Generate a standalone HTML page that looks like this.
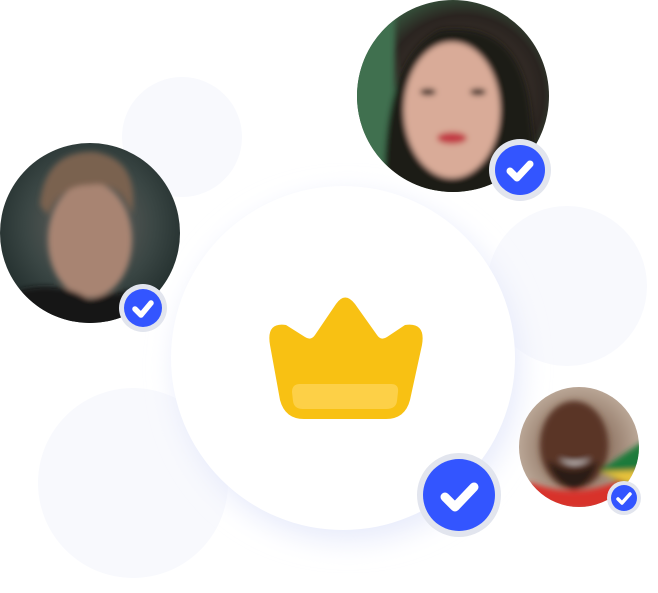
<!DOCTYPE html>
<html><head><meta charset="utf-8"><style>
html,body{margin:0;padding:0;background:#fff;width:658px;height:593px;overflow:hidden}
</style></head><body>
<svg width="658" height="593" viewBox="0 0 658 593" xmlns="http://www.w3.org/2000/svg">
<defs>
<filter id="sh" x="-30%" y="-30%" width="160%" height="160%"><feGaussianBlur stdDeviation="14"/></filter>
<filter id="soft"><feGaussianBlur stdDeviation="3"/></filter>
<radialGradient id="man" cx="0.5" cy="0.45" r="0.6"><stop offset="0" stop-color="#6a6460"/><stop offset="0.6" stop-color="#3a4644"/><stop offset="1" stop-color="#1e2a29"/></radialGradient>
<radialGradient id="wom" cx="0.55" cy="0.5" r="0.6"><stop offset="0" stop-color="#5a4a40"/><stop offset="0.7" stop-color="#2a2420"/><stop offset="1" stop-color="#3c6a4a"/></radialGradient>
<radialGradient id="guy" cx="0.5" cy="0.5" r="0.6"><stop offset="0" stop-color="#6a4a38"/><stop offset="1" stop-color="#c9b8a8"/></radialGradient>
<clipPath id="c1"><circle cx="90" cy="233" r="90"/></clipPath>
<clipPath id="c2"><circle cx="453" cy="96" r="96"/></clipPath>
<clipPath id="c3"><circle cx="579" cy="447" r="60"/></clipPath>
</defs>
<circle cx="182" cy="137" r="60" fill="#f8f9fd"/>
<circle cx="567" cy="286" r="80" fill="#f8f9fd"/>
<circle cx="133" cy="483" r="95" fill="#f8f9fd"/>
<circle cx="348" cy="368" r="172" fill="#e6eafb" filter="url(#sh)"/>
<circle cx="343" cy="358" r="172" fill="#fff"/>
<!-- man -->
<g clip-path="url(#c1)">
<rect x="0" y="143" width="180" height="180" fill="url(#man)"/>
<g filter="url(#soft)">
<ellipse cx="90" cy="240" rx="42" ry="58" fill="#a88472"/>
<path d="M40 205 Q45 150 95 152 Q140 160 132 215 Q120 180 90 185 Q60 185 48 215 Z" fill="#7a6250"/>
<path d="M0 330 L20 290 Q60 280 90 300 Q130 285 170 295 L180 330 Z" fill="#181818"/>
</g>
</g>
<!-- woman -->
<g clip-path="url(#c2)">
<rect x="357" y="0" width="192" height="192" fill="url(#wom)"/>
<g filter="url(#soft)">
<rect x="350" y="0" width="45" height="192" fill="#3f7050"/>
<path d="M385 200 Q380 60 440 30 Q520 20 530 110 L540 200 Z" fill="#1e1a18"/>
<ellipse cx="452" cy="110" rx="48" ry="68" fill="#d9ab98"/>
<ellipse cx="452" cy="138" rx="15" ry="6" fill="#c23a45"/>
<ellipse cx="428" cy="92" rx="8" ry="3.5" fill="#3a2a22"/>
<ellipse cx="478" cy="92" rx="8" ry="3.5" fill="#3a2a22"/>
</g>
</g>
<!-- small guy -->
<g clip-path="url(#c3)">
<rect x="519" y="387" width="120" height="120" fill="url(#guy)"/>
<g filter="url(#soft)">
<path d="M600 470 L645 440 L645 500 Z" fill="#1e7a3a"/>
<path d="M600 472 L645 470 L645 490 Z" fill="#e8c23a"/>
<ellipse cx="574" cy="445" rx="34" ry="44" fill="#5a3626"/>
<path d="M548 460 Q574 480 598 460 Q594 482 574 490 Q552 482 548 460Z" fill="#2a1a14"/>
<path d="M558 458 Q574 470 592 458 Q574 466 558 458Z" fill="#fff"/>
<path d="M515 510 L530 482 Q574 500 620 480 L645 510 Z" fill="#d8302a"/>
</g>
</g>
<!-- crown -->
<path d="M270 345 Q266 322 286 325 L305 337 Q311 341 315 335 L336 304 Q345 291 355 304 L377 335 Q381 341 387 337 L405 325 Q426 322 422 345 L410 400 Q405 419 386 419 L304 419 Q285 419 280 400 Z" fill="#f8c113"/>
<path d="M292 392 Q292 384 300 384 L391 384 Q399 384 398 392 L397 401 Q396 409 386 409 L303 409 Q294 409 293 401 Z" fill="#fdd047"/>
<!-- badges -->
<g>
<circle cx="520" cy="170" r="31" fill="#e2e5ee"/><circle cx="520" cy="170" r="25" fill="#3355ff"/>
<path d="M510 171 L517 178 L530 164" stroke="#fff" stroke-width="7" fill="none" stroke-linecap="round" stroke-linejoin="round"/>
<circle cx="143" cy="308" r="24" fill="#e2e5ee"/><circle cx="143" cy="308" r="19" fill="#3355ff"/>
<path d="M135 309 L141 315 L151 303" stroke="#fff" stroke-width="5.5" fill="none" stroke-linecap="round" stroke-linejoin="round"/>
<circle cx="459" cy="495" r="42" fill="#e2e5ee"/><circle cx="459" cy="495" r="36" fill="#3355ff"/>
<path d="M445 497 L455 507 L474 487" stroke="#fff" stroke-width="9" fill="none" stroke-linecap="round" stroke-linejoin="round"/>
<circle cx="624" cy="498" r="17" fill="#e2e5ee"/><circle cx="624" cy="498" r="13" fill="#3355ff"/>
<path d="M618 499 L622 503 L630 494" stroke="#fff" stroke-width="3.5" fill="none" stroke-linecap="round" stroke-linejoin="round"/>
</g>
</svg>
</body></html>
